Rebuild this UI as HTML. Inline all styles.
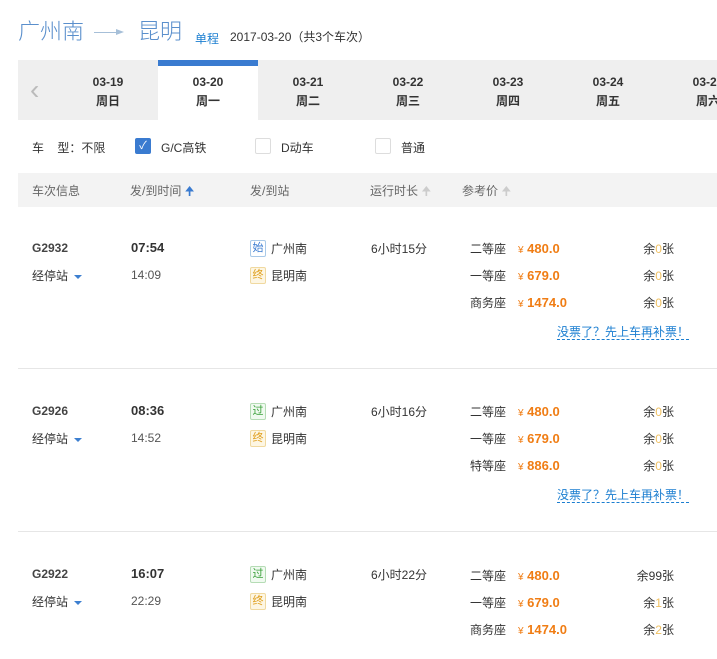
<!DOCTYPE html>
<html><head><meta charset="utf-8"><style>
body{margin:0;width:717px;height:659px;overflow:hidden;background:#fff;font-family:"Liberation Sans","Noto Sans CJK SC",sans-serif;color:#333;position:relative}
.a{position:absolute;white-space:nowrap}
.t{font-size:12px}
.tab{position:absolute;top:60px;width:100px;height:60px;text-align:center;font-size:12px;font-weight:bold;color:#333}
.tab div{margin-top:13px;line-height:19px}
.o{color:#f07d14;font-weight:bold;font-size:13px}
.y{color:#f07d14;font-size:10px;font-weight:normal}
.bd{position:absolute;width:14px;height:15px;font-size:11px;text-align:center;line-height:15px;border-radius:2px}
.sep{position:absolute;left:18px;width:699px;height:1px;background:#e6e6e6}
.lnk{color:#1b7ed0;font-size:12px;border-bottom:1px dashed #1b7ed0}
.tri{display:inline-block;width:0;height:0;border-left:4px solid transparent;border-right:4px solid transparent;border-top:4px solid #3c7fd0;margin-left:6px;vertical-align:middle}
.s{top:-2px}
</style></head><body>
<div class="a" style="left:18px;top:16px;font-size:22px;color:#5a8fcc;font-family:'Noto Sans CJK SC',sans-serif;font-weight:300;line-height:28px">广州南</div>
<div class="a" style="left:94px;top:32px;width:24px;height:1px;background:#a6bfd8"></div>
<div class="a" style="left:116px;top:29px;border-left:8px solid #a6bfd8;border-top:3px solid transparent;border-bottom:3px solid transparent"></div>
<div class="a" style="left:138px;top:16px;font-size:22px;color:#5a8fcc;font-family:'Noto Sans CJK SC',sans-serif;font-weight:300;line-height:28px">昆明</div>
<div class="a" style="left:195px;top:30px;font-size:12px;color:#1b7ed0">单程</div>
<div class="a" style="left:230px;top:28px;font-size:12px;color:#333">2017-03-20（共3个车次）</div>

<div class="a" style="left:18px;top:60px;width:699px;height:60px;background:#efefef"></div>
<div class="a" style="left:30px;top:74px;font-size:28px;color:#bbb;font-weight:300">‹</div>
<div class="tab" style="left:58px"><div>03-19<br>周日</div></div>
<div class="tab" style="left:158px;background:#fff;border-top:6px solid #3a7bd0;height:54px"><div style="margin-top:7px">03-20<br>周一</div></div>
<div class="tab" style="left:258px"><div>03-21<br>周二</div></div>
<div class="tab" style="left:358px"><div>03-22<br>周三</div></div>
<div class="tab" style="left:458px"><div>03-23<br>周四</div></div>
<div class="tab" style="left:558px"><div>03-24<br>周五</div></div>
<div class="tab" style="left:658px"><div>03-25<br>周六</div></div>

<div class="a t" style="left:32px;top:139px">车&nbsp;&nbsp;&nbsp;&nbsp;型：不限</div>
<div class="a" style="left:135px;top:138px;width:16px;height:16px;background:#3a7bd0;border-radius:2px;color:#fff;font-size:11px;text-align:center;line-height:16px">✓</div>
<div class="a t" style="left:161px;top:139px">G/C高铁</div>
<div class="a" style="left:255px;top:138px;width:14px;height:14px;border:1px solid #ddd;border-radius:2px"></div>
<div class="a t" style="left:281px;top:139px">D动车</div>
<div class="a" style="left:375px;top:138px;width:14px;height:14px;border:1px solid #ddd;border-radius:2px"></div>
<div class="a t" style="left:401px;top:139px">普通</div>

<div class="a" style="left:18px;top:173px;width:699px;height:34px;background:#f3f3f3"></div>
<div class="a t" style="left:32px;top:182px;color:#666">车次信息</div>
<div class="a t" style="left:130px;top:182px;color:#666">发/到时间 <span style="color:#3a7bd0">🠉</span></div>
<div class="a t" style="left:250px;top:182px;color:#666">发/到站</div>
<div class="a t" style="left:370px;top:182px;color:#666">运行时长 <span style="color:#ccc">🠉</span></div>
<div class="a t" style="left:462px;top:182px;color:#666">参考价 <span style="color:#ccc">🠉</span></div>

<div class="a t" style="left:32px;top:241px;font-weight:bold;color:#444">G2932</div>
<div class="a t" style="left:32px;top:267px">经停站<span class="tri"></span></div>
<div class="a" style="left:131px;top:240px;font-size:13px;font-weight:bold">07:54</div>
<div class="a t" style="left:131px;top:268px;color:#555">14:09</div>
<div class="bd" style="left:250px;top:240px;border:1px solid #a9c9e8;color:#3a7bd0">始</div>
<div class="a t" style="left:271px;top:240px">广州南</div>
<div class="bd" style="left:250px;top:267px;border:1px solid #f0d9a0;background:#fdf6e3;color:#e0a020">终</div>
<div class="a t" style="left:271px;top:267px">昆明南</div>
<div class="a t" style="left:371px;top:240px">6小时15分</div>
<div class="a t" style="left:470px;top:240px">二等座</div><div class="a o" style="left:518px;top:241px"><span class="y">¥</span> 480.0</div><div class="a t" style="right:43px;top:240px">余<span style="color:#f0c060">0</span>张</div>
<div class="a t" style="left:470px;top:267px">一等座</div><div class="a o" style="left:518px;top:268px"><span class="y">¥</span> 679.0</div><div class="a t" style="right:43px;top:267px">余<span style="color:#f0c060">0</span>张</div>
<div class="a t" style="left:470px;top:294px">商务座</div><div class="a o" style="left:518px;top:295px"><span class="y">¥</span> 1474.0</div><div class="a t" style="right:43px;top:294px">余<span style="color:#f0c060">0</span>张</div>
<div class="a" style="left:557px;top:323px"><span class="lnk">没票了？先上车再补票！</span></div>
<div class="sep" style="top:368px"></div>

<div class="a t" style="left:32px;top:404px;font-weight:bold;color:#444">G2926</div>
<div class="a t" style="left:32px;top:430px">经停站<span class="tri"></span></div>
<div class="a" style="left:131px;top:403px;font-size:13px;font-weight:bold">08:36</div>
<div class="a t" style="left:131px;top:431px;color:#555">14:52</div>
<div class="bd" style="left:250px;top:403px;border:1px solid #b5dcb5;background:#f0faf0;color:#3aa03a">过</div>
<div class="a t" style="left:271px;top:403px">广州南</div>
<div class="bd" style="left:250px;top:430px;border:1px solid #f0d9a0;background:#fdf6e3;color:#e0a020">终</div>
<div class="a t" style="left:271px;top:430px">昆明南</div>
<div class="a t" style="left:371px;top:403px">6小时16分</div>
<div class="a t" style="left:470px;top:403px">二等座</div><div class="a o" style="left:518px;top:404px"><span class="y">¥</span> 480.0</div><div class="a t" style="right:43px;top:403px">余<span style="color:#f0c060">0</span>张</div>
<div class="a t" style="left:470px;top:430px">一等座</div><div class="a o" style="left:518px;top:431px"><span class="y">¥</span> 679.0</div><div class="a t" style="right:43px;top:430px">余<span style="color:#f0c060">0</span>张</div>
<div class="a t" style="left:470px;top:457px">特等座</div><div class="a o" style="left:518px;top:458px"><span class="y">¥</span> 886.0</div><div class="a t" style="right:43px;top:457px">余<span style="color:#f0c060">0</span>张</div>
<div class="a" style="left:557px;top:486px"><span class="lnk">没票了？先上车再补票！</span></div>
<div class="sep" style="top:531px"></div>

<div class="a t" style="left:32px;top:567px;font-weight:bold;color:#444">G2922</div>
<div class="a t" style="left:32px;top:593px">经停站<span class="tri"></span></div>
<div class="a" style="left:131px;top:566px;font-size:13px;font-weight:bold">16:07</div>
<div class="a t" style="left:131px;top:594px;color:#555">22:29</div>
<div class="bd" style="left:250px;top:566px;border:1px solid #b5dcb5;background:#f0faf0;color:#3aa03a">过</div>
<div class="a t" style="left:271px;top:566px">广州南</div>
<div class="bd" style="left:250px;top:593px;border:1px solid #f0d9a0;background:#fdf6e3;color:#e0a020">终</div>
<div class="a t" style="left:271px;top:593px">昆明南</div>
<div class="a t" style="left:371px;top:566px">6小时22分</div>
<div class="a t" style="left:470px;top:567px">二等座</div><div class="a o" style="left:518px;top:568px"><span class="y">¥</span> 480.0</div><div class="a t" style="right:43px;top:567px">余99张</div>
<div class="a t" style="left:470px;top:594px">一等座</div><div class="a o" style="left:518px;top:595px"><span class="y">¥</span> 679.0</div><div class="a t" style="right:43px;top:594px">余<span style="color:#f0c060">1</span>张</div>
<div class="a t" style="left:470px;top:621px">商务座</div><div class="a o" style="left:518px;top:622px"><span class="y">¥</span> 1474.0</div><div class="a t" style="right:43px;top:621px">余<span style="color:#f0c060">2</span>张</div>
</body></html>
